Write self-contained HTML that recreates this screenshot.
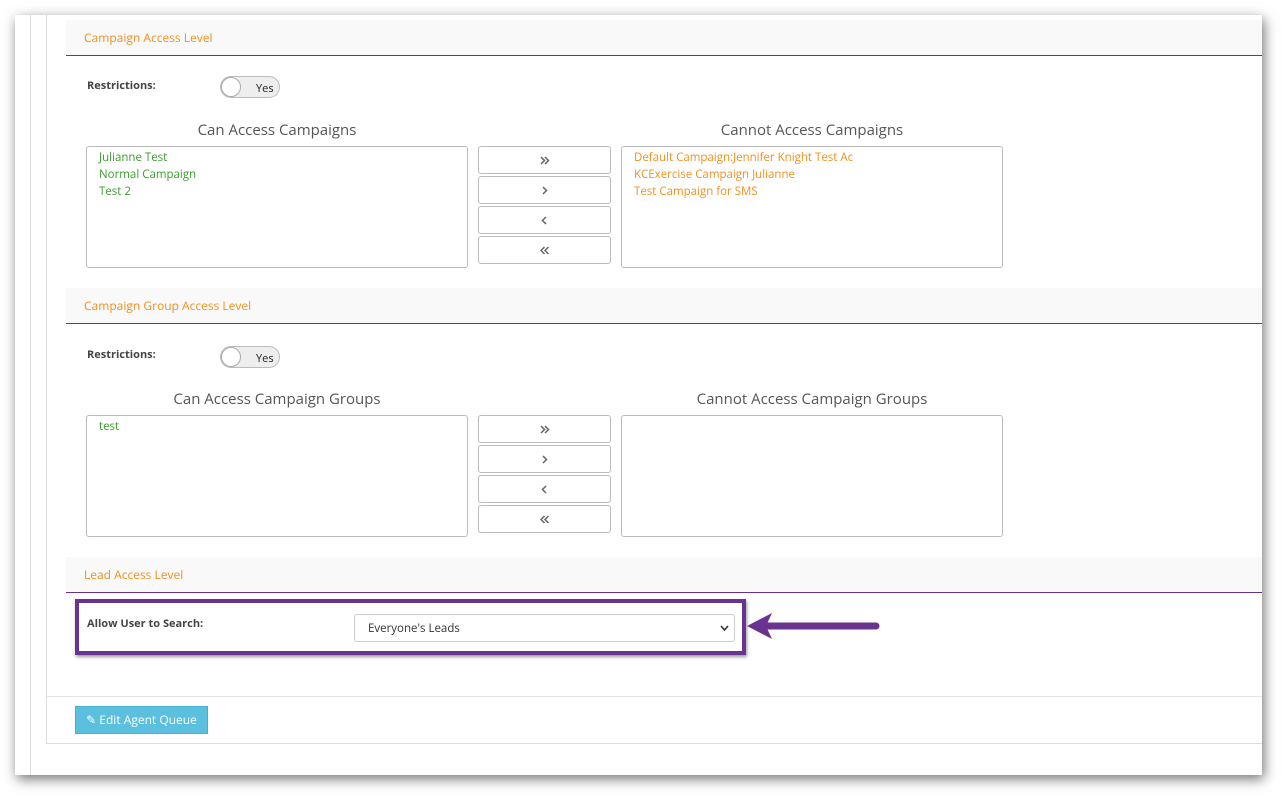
<!DOCTYPE html>
<html><head><style>
body{margin:0;width:1287px;height:800px;background:#fff;position:relative;overflow:hidden;font-family:"Open Sans","Liberation Sans",sans-serif;}
.shot{position:absolute;left:15px;top:15px;width:1247px;height:760px;background:#fff;box-shadow:2px 4px 12px rgba(0,0,0,.55);overflow:hidden}
.a{position:absolute}
.hdr{position:absolute;left:51px;width:1196px;height:36px;background:#f9f9f9;border-bottom:1px solid #6b2f91;color:#f0901e;font-size:12px;line-height:36px;padding-left:18px;box-sizing:border-box}
.lbl{position:absolute;font-size:11px;font-weight:bold;color:#444}
.tog{position:absolute;width:60px;height:22px;border:1px solid #bbb;border-radius:12px;background:#eee;box-sizing:border-box;font-size:11px;color:#222}
.tog i{position:absolute;left:0;top:0;width:20px;height:20px;border-radius:50%;background:#fff;border:1px solid #aaa;box-sizing:border-box}
.tog span{position:absolute;left:35px;top:4px}
.ttl{position:absolute;font-size:15px;color:#555;text-align:center;width:382px}
.box{position:absolute;width:382px;height:122px;border:1px solid #bbb;border-radius:3px;box-sizing:border-box;padding:2px 12px;font-size:11.5px;line-height:17px}
.g{color:#3a9e2e}.o{color:#f0901e}
.btn{position:absolute;left:463px;width:133px;height:28px;border:1px solid #bbb;border-radius:3px;box-sizing:border-box}
.btn svg{position:absolute;left:61px;top:9px}
</style></head><body>
<svg width="0" height="0" style="position:absolute">
<defs>
<g id="rr"><path d="M1 1 L4.5 4.5 L1 8 M5 1 L8.5 4.5 L5 8" fill="none" stroke="#666" stroke-width="1.5"/></g>
<g id="r"><path d="M3 1 L6.5 4.5 L3 8" fill="none" stroke="#666" stroke-width="1.5"/></g>
<g id="l"><path d="M6 1 L2.5 4.5 L6 8" fill="none" stroke="#666" stroke-width="1.5"/></g>
<g id="ll"><path d="M4.5 1 L1 4.5 L4.5 8 M8.5 1 L5 4.5 L8.5 8" fill="none" stroke="#666" stroke-width="1.5"/></g>
</defs></svg>
<div class="shot">
<div class="a" style="left:15px;top:0;width:1px;height:760px;background:#ddd"></div>
<div class="a" style="left:31px;top:0;width:1px;height:729px;background:#ddd"></div>
<div class="a" style="left:31px;top:728px;width:1216px;height:1px;background:#ddd"></div>
<div class="a" style="left:32px;top:681px;width:1215px;height:1px;background:#e5e5e5"></div>

<div class="hdr" style="top:5px">Campaign Access Level</div>
<div class="lbl" style="left:72px;top:63px">Restrictions:</div>
<div class="tog" style="left:205px;top:61px"><i></i><span>Yes</span></div>
<div class="ttl" style="left:71px;top:105px">Can Access Campaigns</div>
<div class="ttl" style="left:606px;top:105px">Cannot Access Campaigns</div>
<div class="box g" style="left:71px;top:131px">Julianne Test<br>Normal Campaign<br>Test 2</div>
<div class="box o" style="left:606px;top:131px">Default Campaign:Jennifer Knight Test Ac<br>KCExercise Campaign Julianne<br>Test Campaign for SMS</div>
<div class="btn" style="top:131px"><svg width="10" height="10"><use href="#rr"/></svg></div>
<div class="btn" style="top:161px"><svg width="10" height="10"><use href="#r"/></svg></div>
<div class="btn" style="top:191px"><svg width="10" height="10"><use href="#l"/></svg></div>
<div class="btn" style="top:221px"><svg width="10" height="10"><use href="#ll"/></svg></div>

<div class="hdr" style="top:273px">Campaign Group Access Level</div>
<div class="lbl" style="left:72px;top:332px">Restrictions:</div>
<div class="tog" style="left:205px;top:331px"><i></i><span>Yes</span></div>
<div class="ttl" style="left:71px;top:374px">Can Access Campaign Groups</div>
<div class="ttl" style="left:606px;top:374px">Cannot Access Campaign Groups</div>
<div class="box g" style="left:71px;top:400px">test</div>
<div class="box" style="left:606px;top:400px"></div>
<div class="btn" style="top:400px"><svg width="10" height="10"><use href="#rr"/></svg></div>
<div class="btn" style="top:430px"><svg width="10" height="10"><use href="#r"/></svg></div>
<div class="btn" style="top:460px"><svg width="10" height="10"><use href="#l"/></svg></div>
<div class="btn" style="top:490px"><svg width="10" height="10"><use href="#ll"/></svg></div>

<div class="hdr" style="top:542px">Lead Access Level</div>
<div class="a" style="left:60px;top:584px;width:671px;height:56px;border:4px solid #6b3390;box-sizing:border-box;box-shadow:1px 2px 3px rgba(0,0,0,.4)"></div>
<div class="lbl" style="left:72px;top:601px">Allow User to Search:</div>
<div class="a" style="left:339px;top:599px;width:381px;height:28px;border:1px solid #ccc;border-radius:3px;box-sizing:border-box;font-size:11.5px;color:#333;line-height:28px;padding-left:13px">Everyone's Leads<svg style="position:absolute;right:5px;top:10px" width="9" height="7"><path d="M1 1 L4.5 5 L8 1" fill="none" stroke="#333" stroke-width="1.6"/></svg></div>
<svg class="a" style="left:730px;top:595px" width="140" height="36"><line x1="20" y1="16" x2="131" y2="16" stroke="#6b3390" stroke-width="7" stroke-linecap="round"/><polygon points="2,16 27,3 21,16 27,29" fill="#6b3390"/></svg>

<div class="a" style="left:60px;top:691px;width:133px;height:28px;background:#5bc0de;border:1px solid #46b0d0;box-sizing:border-box;color:#fff;font-size:12px;line-height:26px;text-align:center">&#9998; Edit Agent Queue</div>
</div>
</body></html>
